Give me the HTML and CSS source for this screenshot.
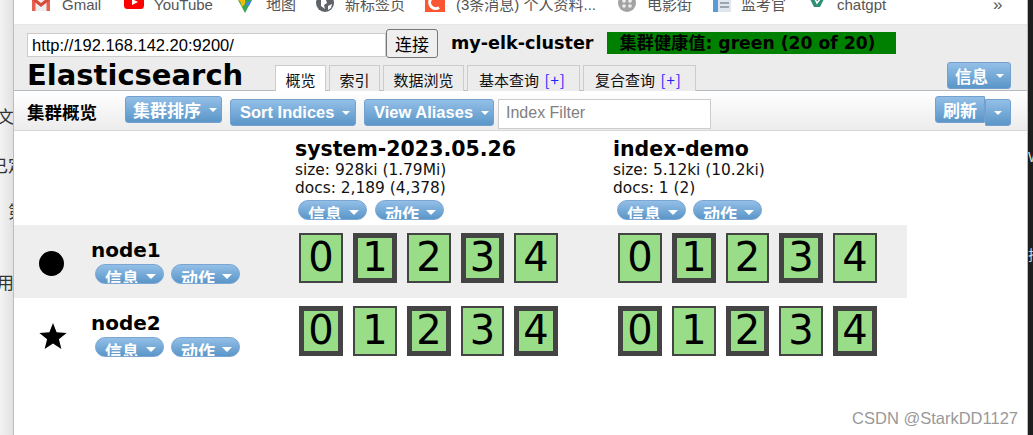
FILE: index.html
```html
<!DOCTYPE html>
<html lang="zh">
<head>
<meta charset="utf-8">
<title>Elasticsearch</title>
<link rel="stylesheet" href="styles.css">
</head>
<body>
<div class="screen">
  <aside class="strip-left">
    <span class="frag f1">文</span>
    <span class="frag f2">已定</span>
    <span class="frag f3">第</span>
    <span class="frag f4">用</span>
  </aside>
  <main class="window">
    <nav class="bookmarks">
      <div class="bm bm-gmail"><svg class="ico" viewBox="0 0 20 20"><path d="M1 0h18v12H1z" fill="#eee"/><path d="M1 -3h3.500v15H1z" fill="#e8604f"/><path d="M15.500 -3H19v15h-3.500z" fill="#e8604f"/><path d="M1 -3l9 7 9-7v4l-9 7-9-7z" fill="#d9493a"/></svg><span>Gmail</span></div>
      <div class="bm bm-yt"><svg class="ico" viewBox="0 0 20 20"><rect x="0" y="-6" width="20" height="15" rx="3.500" fill="#f00"/><path d="M8 -1l6 3-6 3z" fill="#fff"/></svg><span>YouTube</span></div>
      <div class="bm bm-maps"><svg class="ico" viewBox="0 0 20 20"><path d="M3 0h14l-7 13z" fill="#34a853"/><path d="M3 0h7v4z" fill="#fbbc04"/><path d="M10 4l7-4v0l-3 6z" fill="#4285f4"/><path d="M5 1l5 3-3 3z" fill="#fbbc04"/></svg><span>地图</span></div>
      <div class="bm bm-new"><svg class="ico" viewBox="0 0 20 20"><circle cx="9" cy="3" r="9" fill="#5f6368"/><path d="M5 -1l5 1 1 3-3 2 1 4-4-3zM12 6l4-2-1 4-3 2z" fill="#fff"/></svg><span>新标签页</span></div>
      <div class="bm bm-csdn"><svg class="ico" viewBox="0 0 20 20"><rect x="0" y="-7" width="20" height="19" fill="#fc5531"/><path d="M14 7.500a6 6 0 1 1 0-10" fill="none" stroke="#fff" stroke-width="3"/></svg><span>(3条消息) 个人资料...</span></div>
      <div class="bm bm-film"><svg class="ico" viewBox="0 0 20 20"><circle cx="9" cy="3" r="9" fill="#a3a3a3"/><circle cx="6" cy="1" r="1.800" fill="#eee"/><circle cx="12" cy="1" r="1.800" fill="#eee"/><circle cx="6" cy="6" r="1.800" fill="#eee"/><circle cx="12" cy="6" r="1.800" fill="#eee"/></svg><span>电影街</span></div>
      <div class="bm bm-exam"><svg class="ico" viewBox="0 0 20 20"><path d="M1 -4h18v16H1z" fill="#dfe6ee"/><path d="M1 -4h5v16H1z" fill="#5b9bd5"/><path d="M8 2h9v2H8zM8 6h9v2H8z" fill="#9aa5b1"/></svg><span>监考官</span></div>
      <div class="bm bm-gpt"><svg class="ico" viewBox="0 0 20 20"><path d="M2 -3h16l-5 10H7z" fill="#2f8f74"/><path d="M8 -1l2 4 3-4" fill="none" stroke="#fff" stroke-width="1.500"/></svg><span>chatgpt</span></div>
      <div class="bm-more">»</div>
    </nav>

    <header class="head">
      <div class="conn">
        <input class="url" type="text" value="http://192.168.142.20:9200/">
        <button class="conn-btn" type="button">连接</button>
        <span class="cluster">my-elk-cluster</span>
        <span class="health">集群健康值: green (20 of 20)</span>
      </div>
      <div class="brand-row">
        <h1 class="brand">Elasticsearch</h1>
        <div class="tabs">
          <div class="tab active">概览</div>
          <div class="tab">索引</div>
          <div class="tab">数据浏览</div>
          <div class="tab tab-query">基本查询 <b class="plus">[+]</b></div>
          <div class="tab tab-query">复合查询 <b class="plus">[+]</b></div>
        </div>
        <button class="btn btn-info" type="button">信息<i class="caret"></i></button>
      </div>
    </header>

    <div class="toolbar">
      <h2 class="tb-title">集群概览</h2>
      <button class="btn btn-sort" type="button">集群排序<i class="caret"></i></button>
      <button class="btn btn-sortidx" type="button">Sort Indices<i class="caret"></i></button>
      <button class="btn btn-alias" type="button">View Aliases<i class="caret"></i></button>
      <input class="filter" type="text" placeholder="Index Filter">
      <div class="refresh">
        <button class="btn btn-refresh" type="button">刷新</button>
        <button class="btn btn-drop" type="button"><i class="caret"></i></button>
      </div>
    </div>

    <section class="overview">
      <div class="row row-head">
        <div></div>
        <div class="idx">
          <h3 class="idx-name">system-2023.05.26</h3>
          <div class="meta">size: 928ki (1.79Mi)</div>
          <div class="meta">docs: 2,189 (4,378)</div>
          <div class="pills pills-a"><span class="pill">信息<i class="caret"></i></span><span class="pill">动作<i class="caret"></i></span></div>
        </div>
        <div class="idx idx-b">
          <h3 class="idx-name">index-demo</h3>
          <div class="meta">size: 5.12ki (10.2ki)</div>
          <div class="meta">docs: 1 (2)</div>
          <div class="pills"><span class="pill">信息<i class="caret"></i></span><span class="pill">动作<i class="caret"></i></span></div>
        </div>
      </div>

      <div class="row row-node shade">
        <div class="node">
          <span class="mark"><svg class="dot" viewBox="0 0 26 26" width="25" height="25"><circle cx="13" cy="13" r="13"/></svg></span>
          <div class="node-info">
            <h3 class="node-name">node1</h3>
            <div class="pills pills-node"><span class="pill">信息<i class="caret"></i></span><span class="pill">动作<i class="caret"></i></span></div>
          </div>
        </div>
        <div class="shards"><span class="shard">0</span><span class="shard rep">1</span><span class="shard">2</span><span class="shard rep narrow">3</span><span class="shard">4</span></div>
        <div class="shards"><span class="shard">0</span><span class="shard rep">1</span><span class="shard narrow">2</span><span class="shard rep">3</span><span class="shard">4</span></div>
      </div>

      <div class="row row-node">
        <div class="node">
          <span class="mark"><svg viewBox="0 0 28 28" width="28" height="28"><path d="M14 1l3.600 9.300 10 .6-7.700 6.300 2.500 9.700L14 21.500 5.600 26.900l2.500-9.700L.4 10.900l10-.6z"/></svg></span>
          <div class="node-info">
            <h3 class="node-name">node2</h3>
            <div class="pills pills-node"><span class="pill">信息<i class="caret"></i></span><span class="pill">动作<i class="caret"></i></span></div>
          </div>
        </div>
        <div class="shards"><span class="shard rep">0</span><span class="shard">1</span><span class="shard rep">2</span><span class="shard narrow">3</span><span class="shard rep">4</span></div>
        <div class="shards"><span class="shard rep">0</span><span class="shard">1</span><span class="shard rep narrow">2</span><span class="shard">3</span><span class="shard rep">4</span></div>
      </div>
    </section>

    <div class="watermark">CSDN @StarkDD1127</div>
  </main>
  <aside class="strip-right">
    <span class="rfrag r1">W</span>
    <span class="rfrag r2">拒</span>
  </aside>
</div>
</body>
</html>
```

FILE: styles.css
```css
* { box-sizing: border-box; }
html, body { margin: 0; padding: 0; }
body {
  width: 1033px;
  height: 435px;
  overflow: hidden;
  background: #fff;
  font-family: "DejaVu Sans", "Noto Sans CJK SC", sans-serif;
  color: #000;
}
h1, h2, h3 { margin: 0; }
.screen { display: flex; width: 1033px; height: 435px; }

.strip-left {
  width: 14px;
  flex: none;
  display: flex;
  flex-direction: column;
  align-items: flex-start;
  background: linear-gradient(to right, #f3f3f3, #e2e2e2);
  border-right: 1px solid #bdbdbd;
  overflow: hidden;
  font: 17px "Noto Sans CJK SC", sans-serif;
  color: #333;
  white-space: nowrap;
}
.frag { display: block; line-height: 20px; }
.f1 { margin: 106px 0 0 -3px; }
.f2 { margin: 29px 0 0 -9px; }
.f3 { margin: 26px 0 0 8px; }
.f4 { margin: 51px 0 0 -3px; }

.strip-right {
  width: 6px;
  flex: none;
  display: flex;
  flex-direction: column;
  background: #1e1e1e;
  border-left: 1px solid #bbb;
  overflow: hidden;
  font: 14px "Liberation Sans", "Noto Sans CJK SC", sans-serif;
  color: #ddd;
  white-space: nowrap;
}
.rfrag { display: block; line-height: 18px; }
.r1 { margin-top: 148px; }
.r2 { margin-top: 80px; }

.window { flex: 1; min-width: 0; position: relative; background: #fff; }

.bookmarks {
  height: 25px;
  display: flex;
  align-items: flex-start;
  background: #fff;
  border-bottom: 1px solid #e6e6e6;
  font: 15px/1 "Liberation Sans", "Noto Sans CJK SC", sans-serif;
  color: #555;
  overflow: hidden;
  white-space: nowrap;
}
.bm { display: flex; align-items: flex-start; flex: none; }
.bm span { margin-top: -4px; line-height: 18px; }
.ico { width: 20px; height: 20px; flex: none; display: block; }
.bm-gmail { margin-left: 17px; width: 93px; gap: 11px; }
.bm-gmail .ico { margin-top: -1px; }
.bm-yt { width: 111px; gap: 10px; }
.bm-maps { width: 81px; gap: 11px; }
.bm-new { width: 109px; gap: 9px; }
.bm-csdn { width: 193px; gap: 11px; }
.bm-film { width: 94px; gap: 9px; }
.bm-exam { width: 95px; gap: 9px; }
.bm-gpt { width: 186px; gap: 10px; }
.bm-more { margin-top: -4px; font-size: 17px; line-height: 18px; }

.head {
  height: 66px;
  background: #ececec;
  border-bottom: 1px solid #b4bac2;
  padding-left: 13px;
}
.conn { height: 35px; display: flex; align-items: flex-start; }
.url {
  width: 359px;
  height: 24px;
  margin-top: 8px;
  padding: 0 4px;
  border: 1px solid #ccc;
  background: #fff;
  font: 16.500px "Liberation Sans", sans-serif;
  color: #000;
}
.conn-btn {
  width: 52px;
  height: 29px;
  margin: 4px 0 0 0;
  padding: 0;
  border: 1px solid #777;
  border-radius: 3px;
  background: #efefef;
  font: 17px "Noto Sans CJK SC", sans-serif;
  color: #000;
}
.cluster { margin: 6px 0 0 13px; font-size: 17.600px; font-weight: 700; line-height: 24px; white-space: nowrap; }
.health {
  width: 289px;
  height: 22px;
  margin: 7px 0 0 13px;
  padding-left: 13px;
  background: #008000;
  font-size: 17.200px;
  font-weight: 700;
  line-height: 22px;
  white-space: nowrap;
}

.brand-row { display: flex; align-items: flex-start; height: 30px; position: relative; }
.brand { font-size: 29px; font-weight: 700; line-height: 30px; width: 248px; flex: none; white-space: nowrap; }
.tabs { display: flex; gap: 3px; margin-top: 5px; height: 26px; }
.tab {
  height: 26px;
  padding: 4px 9.500px 0;
  border: 1px solid #ccc;
  border-bottom: 0;
  background: #ececec;
  font: 15px/20px "Noto Sans CJK SC", sans-serif;
  color: #111;
  white-space: nowrap;
}
.tab-query { width: 113px; padding: 4px 0 0 11px; }
.tab.active { background: #fff; height: 26px; position: relative; z-index: 1; }
.plus { font-weight: 400; color: #22f; margin-left: 2px; letter-spacing: 1px; }

.btn {
  height: 27px;
  padding: 0 10px;
  border: 1px solid #74a0cd;
  border-radius: 3px;
  background: linear-gradient(to bottom, #93bfe7, #5a96c8);
  color: #fff;
  font: 700 16.500px "Liberation Sans", "Noto Sans CJK SC", sans-serif;
  white-space: nowrap;
  display: inline-flex;
  align-items: center;
  flex: none;
}
.caret {
  display: inline-block;
  width: 0;
  height: 0;
  margin-left: 8px;
  border-left: 4px solid transparent;
  border-right: 4px solid transparent;
  border-top: 4px solid #fff;
}
.btn-info { margin: 2px 16px 0 auto; width: 64px; padding: 0 7px; }

.toolbar {
  height: 40px;
  display: flex;
  align-items: flex-start;
  padding-left: 13px;
  background: linear-gradient(to bottom, #fff, #ececec);
  border-bottom: 1px solid #d4d8dd;
}
.tb-title { font: 700 17.500px/24px "Noto Sans CJK SC", sans-serif; width: 98px; margin-top: 9px; flex: none; }
.toolbar .btn { margin-right: 8px; margin-top: 8px; }
.toolbar .btn-sort { margin-top: 5px; margin-right: 8px; height: 27px; width: 97px; padding: 0 7px; font-size: 17px; }
.toolbar .btn-sortidx { width: 126px; padding: 0 9px; }
.toolbar .btn-alias { width: 130px; padding: 0 9px; margin-right: 4px; }
.filter {
  width: 213px;
  height: 30px;
  margin: 8px 0 0 0;
  padding: 0 7px 3px;
  border: 1px solid #ccc;
  background: #fff;
  font: 16px "Liberation Sans", sans-serif;
}
.filter::placeholder { color: #808080; opacity: 1; }
.refresh { display: flex; margin: 5px 16px 0 auto; }
.toolbar .refresh .btn { margin: 0; font-size: 17px; }
.toolbar .refresh .btn-refresh { width: 50px; height: 27px; padding: 0 7px; border-radius: 3px 0 0 3px; }
.toolbar .refresh .btn-drop { width: 26px; height: 27px; margin-top: 3px; padding: 0; border-radius: 0 3px 3px 0; justify-content: center; }
.btn-drop .caret { margin-left: 0; }

.overview { width: 893px; }
.row { display: grid; grid-template-columns: 281px 319px 293px; }
.row-head { height: 94px; }
.row-node { height: 73px; }
.shade { background: #eee; }

.idx { padding-top: 6px; }
.idx-name { font-size: 20.500px; font-weight: 700; line-height: 24px; white-space: nowrap; }
.meta { font-size: 15.400px; line-height: 18px; color: #111; white-space: nowrap; }
.idx-b .meta, .idx-b .idx-name { margin-left: -1px; }

.pills { display: flex; gap: 7px; margin: 3px 0 0 3px; }
.pills-a { gap: 8px; }
.pill {
  width: 69px;
  height: 20px;
  padding-left: 9px;
  border: 1px solid #7ba6d2;
  border-radius: 10px;
  background: linear-gradient(to bottom, #93bfe7, #5a96c8);
  color: #fff;
  font: 700 17px/25px "Noto Sans CJK SC", sans-serif;
  overflow: hidden;
  display: inline-flex;
  align-items: flex-start;
  flex: none;
  white-space: nowrap;
}
.pill .caret { margin: 9px 0 0 7px; border-left-width: 5px; border-right-width: 5px; border-top-width: 5px; }

.node { display: flex; align-items: flex-start; }
.mark { width: 77px; flex: none; height: 73px; display: flex; justify-content: center; align-items: flex-start; padding-top: 24px; }
.mark svg { display: block; fill: #000; }
.mark .dot { margin: 2px 2px 0 0; }
.node-info { padding-top: 13px; }
.node-name { font-size: 20px; font-weight: 700; line-height: 24px; }
.pills-node { margin: 2px 0 0 4px; }

.shards { display: flex; gap: 10px; padding: 8px 0 0 4px; }
.shard {
  width: 44px;
  height: 50px;
  border: 2px solid #444;
  background: #9d8;
  font-size: 40px;
  line-height: 44px;
  text-align: center;
  color: #000;
  flex: none;
}
.shard.narrow { width: 43px; }
.shard.rep { border-width: 5px; line-height: 38px; }

.watermark {
  position: absolute;
  right: 9px;
  bottom: 7px;
  font: 16.500px "Liberation Sans", sans-serif;
  color: #999;
  white-space: nowrap;
}
```
